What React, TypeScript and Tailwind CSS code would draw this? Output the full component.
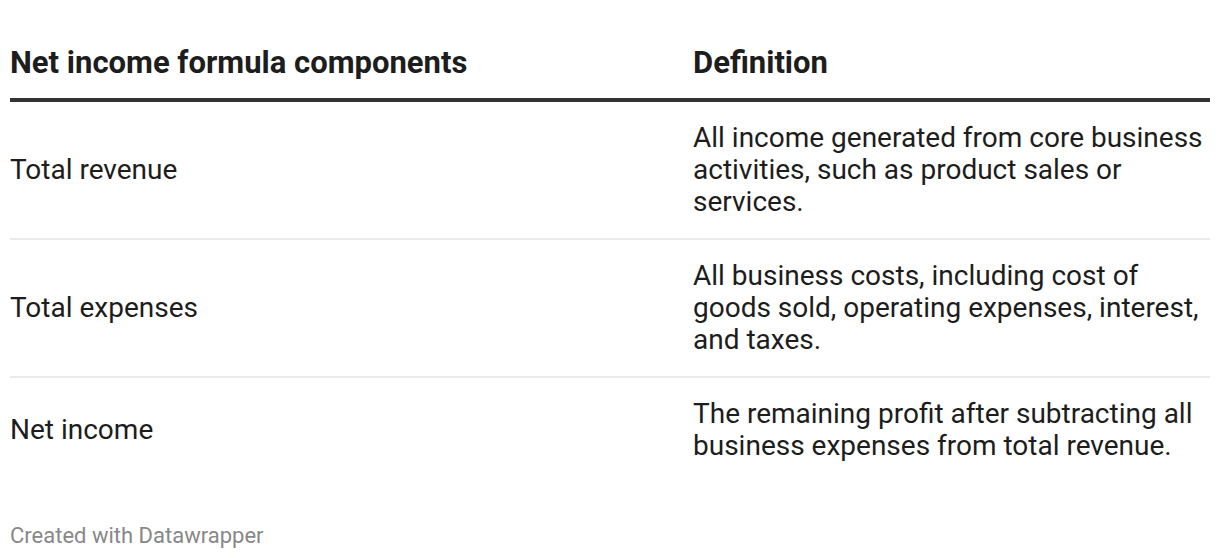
const rows = [
  {
    name: "Total revenue",
    def: "All income generated from core business activities, such as product sales or services.",
  },
  {
    name: "Total expenses",
    def: "All business costs, including cost of goods sold, operating expenses, interest, and taxes.",
  },
  {
    name: "Net income",
    def: "The remaining profit after subtracting all business expenses from total revenue.",
  },
];

export default function App() {
  return (
    <div className="w-[1220px] h-[558px] overflow-hidden bg-white px-[10px] text-[#1d1d1d]" style={{ fontFamily: "Roboto, 'Liberation Sans', sans-serif" }}>
      <table className="w-full border-collapse mt-[47px]">
        <thead>
          <tr className="border-b-[4px] border-[#333333]">
            <th className="text-left font-bold text-[31px] leading-[32px] pb-[19px] p-0 w-[683px]">Net income formula components</th>
            <th className="text-left font-bold text-[31px] leading-[32px] pb-[19px] p-0">Definition</th>
          </tr>
        </thead>
        <tbody>
          {rows.map((r, i) => (
            <tr key={r.name} className={i < rows.length - 1 ? "border-b-2 border-[#ebebeb]" : ""}>
              <td className="text-[28px] leading-[32px] py-[20px] align-middle">{r.name}</td>
              <td className="text-[28px] leading-[32px] py-[20px] pr-[4px]">{r.def}</td>
            </tr>
          ))}
        </tbody>
      </table>
      <div className="mt-[41px] text-[22px] leading-[26px] text-[#888888]">Created with Datawrapper</div>
    </div>
  );
}
